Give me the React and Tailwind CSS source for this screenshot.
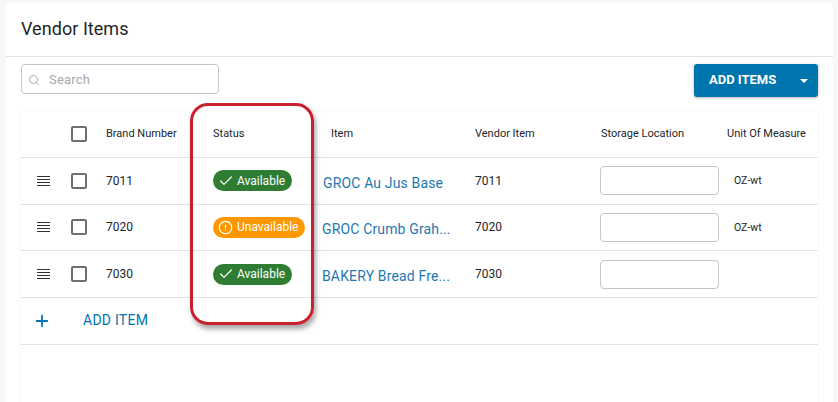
import React from 'react';
import { Search, Plus, Check, CircleAlert } from 'lucide-react';

const rows = [
  { brand: '7011', status: 'Available', item: 'GROC Au Jus Base', itemPad: 'pl-[2px]', vendor: '7011', unit: 'OZ-wt' },
  { brand: '7020', status: 'Unavailable', item: 'GROC Crumb Grah...', itemPad: 'pl-[1px]', vendor: '7020', unit: 'OZ-wt' },
  { brand: '7030', status: 'Available', item: 'BAKERY Bread Fre...', itemPad: 'pl-[1px]', vendor: '7030', unit: '' },
];

function Checkbox() {
  return <div className="w-4 h-4 rounded-[2px] border-2 border-[#6f6f6f] bg-white" />;
}

function DragHandle() {
  return (
    <svg width="13" height="10" viewBox="0 0 13 10" className="block">
      <path d="M0 .5h13M0 3.5h13M0 6.5h13M0 9.5h13" stroke="#333" strokeWidth="1.1" />
    </svg>
  );
}

function StatusChip({ status }) {
  if (status === 'Available') {
    return (
      <div className="h-[21px] w-[79px] rounded-full bg-[#2e7d32] text-white flex items-center pl-[5px] gap-[3px] text-[12px]">
        <Check size={16} strokeWidth={1.8} />
        <span>Available</span>
      </div>
    );
  }
  return (
    <div className="h-[21px] w-[92px] rounded-full bg-[#ff9800] text-white flex items-center pl-[5px] gap-[4px] text-[12px]">
      <CircleAlert size={15} strokeWidth={2} />
      <span>Unavailable</span>
    </div>
  );
}

export default function App() {
  return (
    <div className="relative w-[838px] h-[402px] overflow-hidden bg-[#f8f8f8] pt-[3px] pl-[6px] font-['Roboto',sans-serif] text-[#212529]">
      <div className="w-[827px] h-[420px] bg-white rounded-t-[4px]">
        <div className="h-[54px] border-b border-[#e2e2e2] pl-[15px] pt-[13px] text-[18px] leading-[26px] font-normal tracking-[0.05px]">Vendor Items</div>

        <div className="flex justify-between items-start pl-[15px] pr-[15px] pt-[7px] h-[54px]">
          <div className="w-[198px] h-[30px] border border-[#c4c4c4] rounded-[4px] flex items-center pl-[6px] pt-[2px] text-[13px] text-[#a9a9a9]">
            <Search size={12} className="text-[#a9a9a9]" />
            <span className="ml-[9px] tracking-[0.2px]">Search</span>
          </div>
          <div className="w-[124px] h-[33px] bg-[#0074ad] rounded-[3px] shadow-[0_1px_3px_rgba(0,0,0,0.3)] text-white flex items-center pl-[15px] pb-[2px] text-[13px] font-bold">
            <span>ADD ITEMS</span>
            <div className="ml-[24px] mt-[2px] w-0 h-0 border-l-[4px] border-r-[4px] border-t-[4px] border-l-transparent border-r-transparent border-t-white" />
          </div>
        </div>

        <div className="ml-[15px] w-[797px] h-[300px] text-[11px] shadow-[0_0_2px_rgba(0,0,0,0.08)]">
          <div className="flex items-center h-[47px] border-b border-[#e2e2e2]">
            <div className="w-[50px]" />
            <div className="w-[35px]"><Checkbox /></div>
            <div className="w-[107px]">Brand Number</div>
            <div className="w-[118px]">Status</div>
            <div className="w-[144px]">Item</div>
            <div className="w-[126px]">Vendor Item</div>
            <div className="w-[126px]">Storage Location</div>
            <div>Unit Of Measure</div>
          </div>

          {rows.map((r) => (
            <div key={r.brand} className="flex items-center h-[46.67px] border-b border-[#e2e2e2]">
              <div className="w-[50px] pl-[16px]"><DragHandle /></div>
              <div className="w-[35px]"><Checkbox /></div>
              <div className="w-[107px] text-[12px]">{r.brand}</div>
              <div className="w-[108px]"><StatusChip status={r.status} /></div>
              <div className={`w-[154px] ${r.itemPad} text-[14px] tracking-[0.15px] text-[#1f78b0] mt-[5px]`}>{r.item}</div>
              <div className="w-[125px] text-[12px]">{r.vendor}</div>
              <div className="w-[134px]">
                <div className="w-[119px] h-[29px] border border-[#c4c4c4] rounded-[4px] bg-white" />
              </div>
              <div className="text-[10.5px]">{r.unit}</div>
            </div>
          ))}

          <div className="flex items-center h-[47px] border-b border-[#e2e2e2]">
            <div className="w-[62px] pl-[12px] text-[#0074ad]"><Plus size={18} strokeWidth={2.4} /></div>
            <div className="text-[14px] tracking-[0.25px] text-[#0074ad]">ADD ITEM</div>
          </div>
        </div>
      </div>

      <div className="absolute left-[190px] top-[103px] w-[124px] h-[222px] rounded-[18px] border-[3px] border-[#c8202d] shadow-[2px_4px_5px_rgba(0,0,0,0.35)]" />
    </div>
  );
}
